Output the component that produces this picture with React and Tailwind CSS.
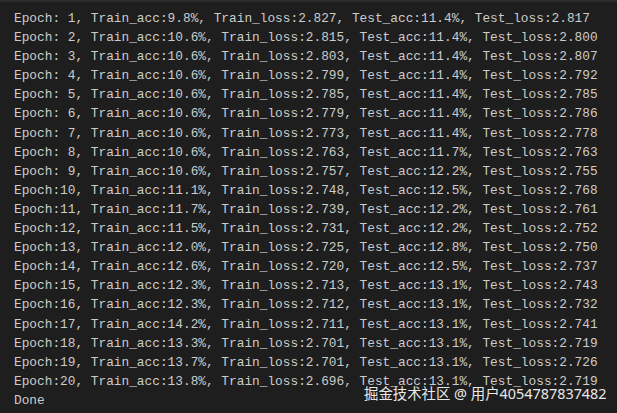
const rows = [
  [" 1", "9.8", "2.827", "11.4", "2.817"],
  [" 2", "10.6", "2.815", "11.4", "2.800"],
  [" 3", "10.6", "2.803", "11.4", "2.807"],
  [" 4", "10.6", "2.799", "11.4", "2.792"],
  [" 5", "10.6", "2.785", "11.4", "2.785"],
  [" 6", "10.6", "2.779", "11.4", "2.786"],
  [" 7", "10.6", "2.773", "11.4", "2.778"],
  [" 8", "10.6", "2.763", "11.7", "2.763"],
  [" 9", "10.6", "2.757", "12.2", "2.755"],
  ["10", "11.1", "2.748", "12.5", "2.768"],
  ["11", "11.7", "2.739", "12.2", "2.761"],
  ["12", "11.5", "2.731", "12.2", "2.752"],
  ["13", "12.0", "2.725", "12.8", "2.750"],
  ["14", "12.6", "2.720", "12.5", "2.737"],
  ["15", "12.3", "2.713", "13.1", "2.743"],
  ["16", "12.3", "2.712", "13.1", "2.732"],
  ["17", "14.2", "2.711", "13.1", "2.741"],
  ["18", "13.3", "2.701", "13.1", "2.719"],
  ["19", "13.7", "2.701", "13.1", "2.726"],
  ["20", "13.8", "2.696", "13.1", "2.719"],
];

export default function App() {
  return (
    <div className="relative w-[617px] h-[413px] overflow-hidden bg-[#1e1e1e] border-t-2 border-[#2c2c2c]">
      {/* terminal output */}
      <div className="flex flex-col pt-[7px] pl-[14px] font-['Liberation_Mono','DejaVu_Sans_Mono',monospace] text-[12.8px] leading-[19.1px] text-[#cccccc] whitespace-pre">
        {rows.map(([ep, tra, trl, tea, tel]) => (
          <div key={ep}>
            {`Epoch:${ep}, Train_acc:${tra}%, Train_loss:${trl}, Test_acc:${tea}%, Test_loss:${tel}`}
          </div>
        ))}
        <div>Done</div>
      </div>

      {/* watermark sits over the last line */}
      <div className="absolute left-[364px] top-[382px] font-['Noto_Sans','Noto_Sans_CJK_SC',sans-serif] text-[14.4px] leading-[20px] text-[#e8e8e8] whitespace-nowrap">
        掘金技术社区 @ 用户4054787837482
      </div>
    </div>
  );
}
